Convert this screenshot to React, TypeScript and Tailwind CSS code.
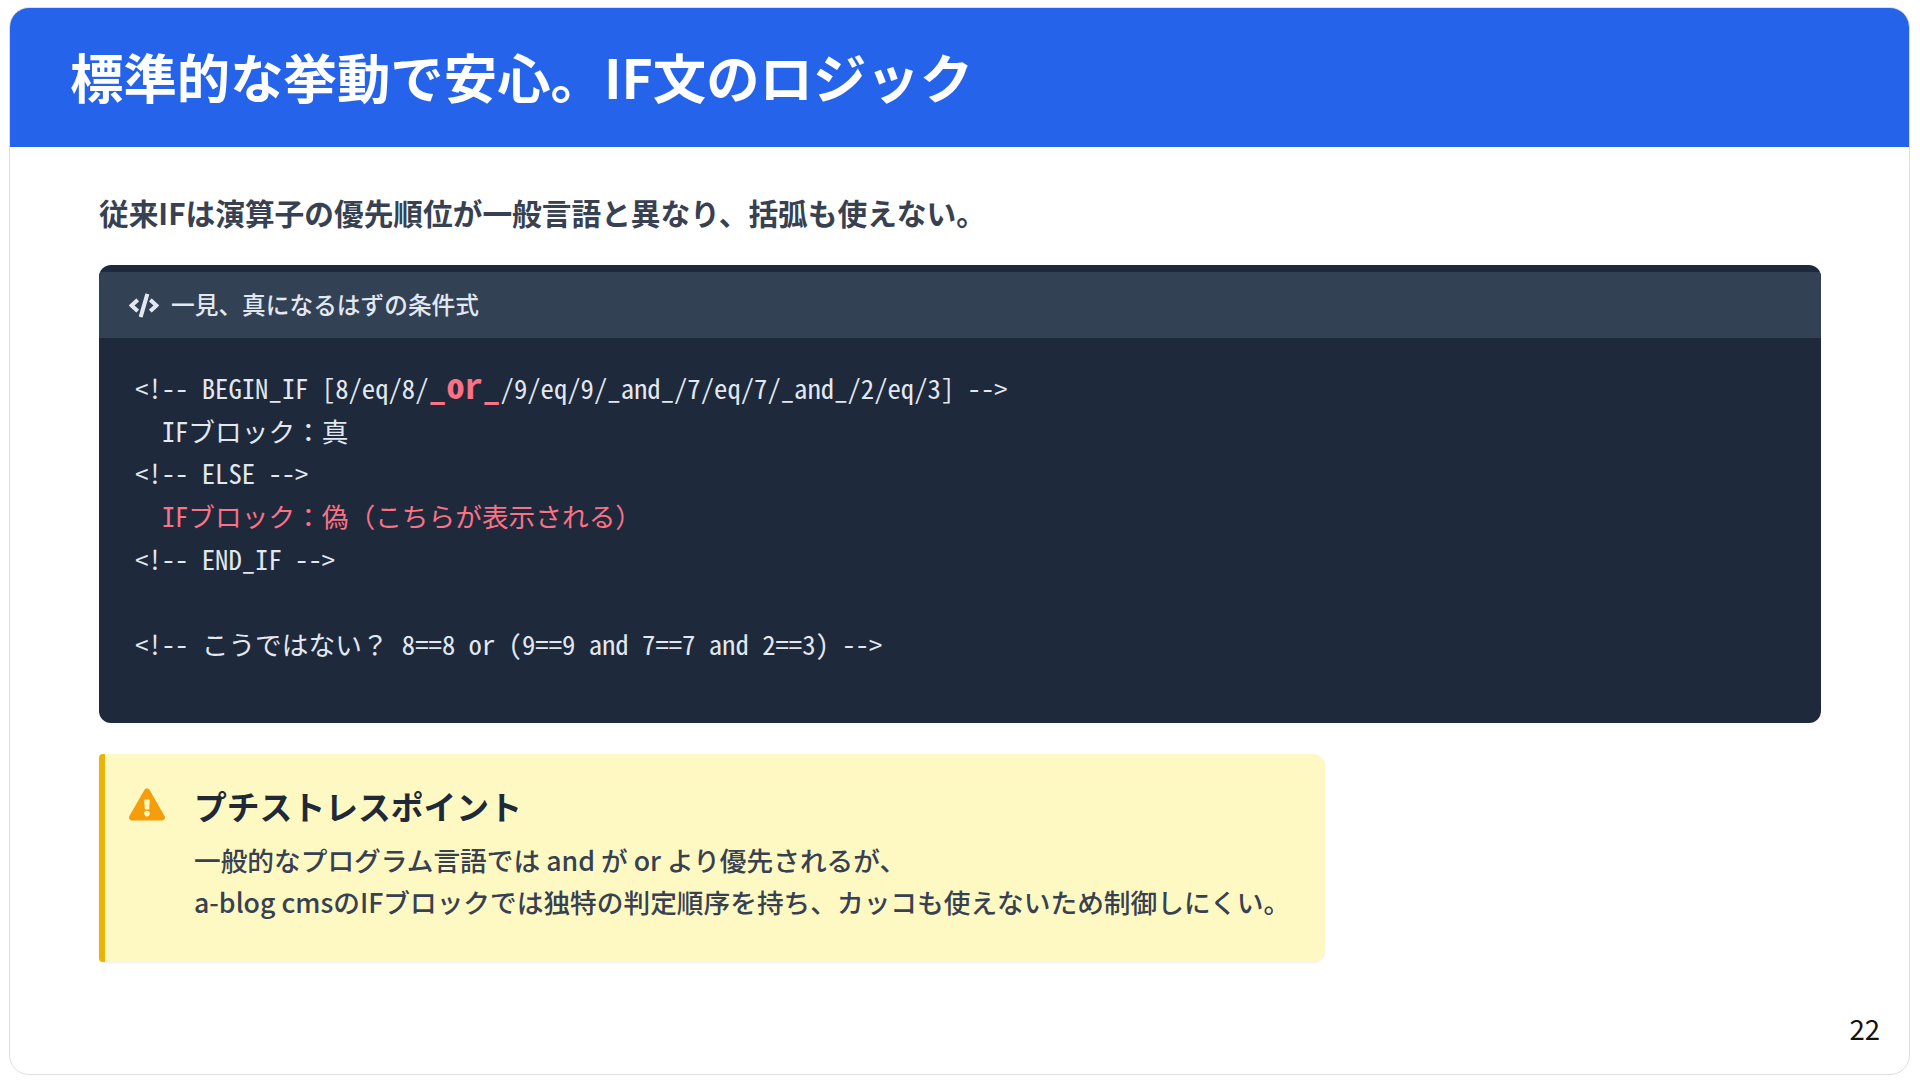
import { FaCode, FaExclamationTriangle } from "react-icons/fa";

const sans = "font-['Noto_Sans_CJK_JP','Noto_Sans',sans-serif]";

export default function App() {
  return (
    <div className={`h-[1086px] bg-white pt-[7px] pb-[11px] pl-[9px] pr-[10px] ${sans}`}>
      <div className="relative h-full border border-[#dcdfe3] rounded-[20px] overflow-hidden flex flex-col">
        {/* Header */}
        <div className="h-[139px] bg-[#2563eb] flex items-center pl-[60px] pb-[4px] shrink-0">
          <h1 className="text-white text-[53.4px] font-bold leading-none">
            標準的な挙動で安心。IF文のロジック
          </h1>
        </div>

        {/* Body */}
        <div className="pt-[45px] pl-[89px] pr-[88px] flex flex-col">
          <p className="text-[#374151] text-[29.7px] font-bold leading-[42px]">
            従来IFは演算子の優先順位が一般言語と異なり、括弧も使えない。
          </p>

          <div className="mt-[31px] h-[458px] rounded-[12px] overflow-hidden bg-[#1e293b] pt-[7px]">
            <div className="h-[66px] bg-[#334155] flex items-center pl-[30px] text-[#e2e8f0] text-[23.7px] font-medium">
              <FaCode className="text-[27px] w-[30px] mr-[12px]" />
              一見、真になるはずの条件式
            </div>
            <pre className="pt-[27px] pl-[36px] text-[#e2e8f0] text-[26.7px] leading-[42.7px] font-['Noto_Sans_Mono_CJK_JP','DejaVu_Sans_Mono',monospace]">
              {"<!-- BEGIN_IF [8/eq/8/"}
              <span className="text-[#fb7185] font-bold text-[36px] leading-none">_or_</span>
              {"/9/eq/9/_and_/7/eq/7/_and_/2/eq/3] -->\n"}
              {"  IFブロック：真\n"}
              {"<!-- ELSE -->\n"}
              <span className="text-[#fb7185]">{"  IFブロック：偽（こちらが表示される）\n"}</span>
              {"<!-- END_IF -->\n\n"}
              {"<!-- こうではない？ 8==8 or (9==9 and 7==7 and 2==3) -->"}
            </pre>
          </div>

          <div className="mt-[31px] w-[1226px] h-[208px] bg-[#fef9c3] border-l-[6px] border-[#eab308] rounded-[12px] rounded-l-[4px] flex shadow-[0_1px_2px_rgba(0,0,0,0.08)]">
            <FaExclamationTriangle className="text-[#f59e0b] text-[33px] ml-[24px] mt-[34px] w-[36px] shrink-0" />
            <div className="ml-[29px] pt-[28px]">
              <h2 className="text-[#1f2937] text-[32.8px] font-bold leading-[48px]">プチストレスポイント</h2>
              <p className="mt-[9px] text-[#374151] text-[26.7px] font-medium leading-[42px]">
                一般的なプログラム言語では and が or より優先されるが、
                <br />
                a-blog cmsのIFブロックでは独特の判定順序を持ち、カッコも使えないため制御しにくい。
              </p>
            </div>
          </div>
        </div>

        <span className="absolute right-[29px] bottom-[32px] text-[#111] text-[27.5px] leading-none font-['Noto_Sans_CJK_JP',sans-serif]">22</span>
      </div>
    </div>
  );
}
